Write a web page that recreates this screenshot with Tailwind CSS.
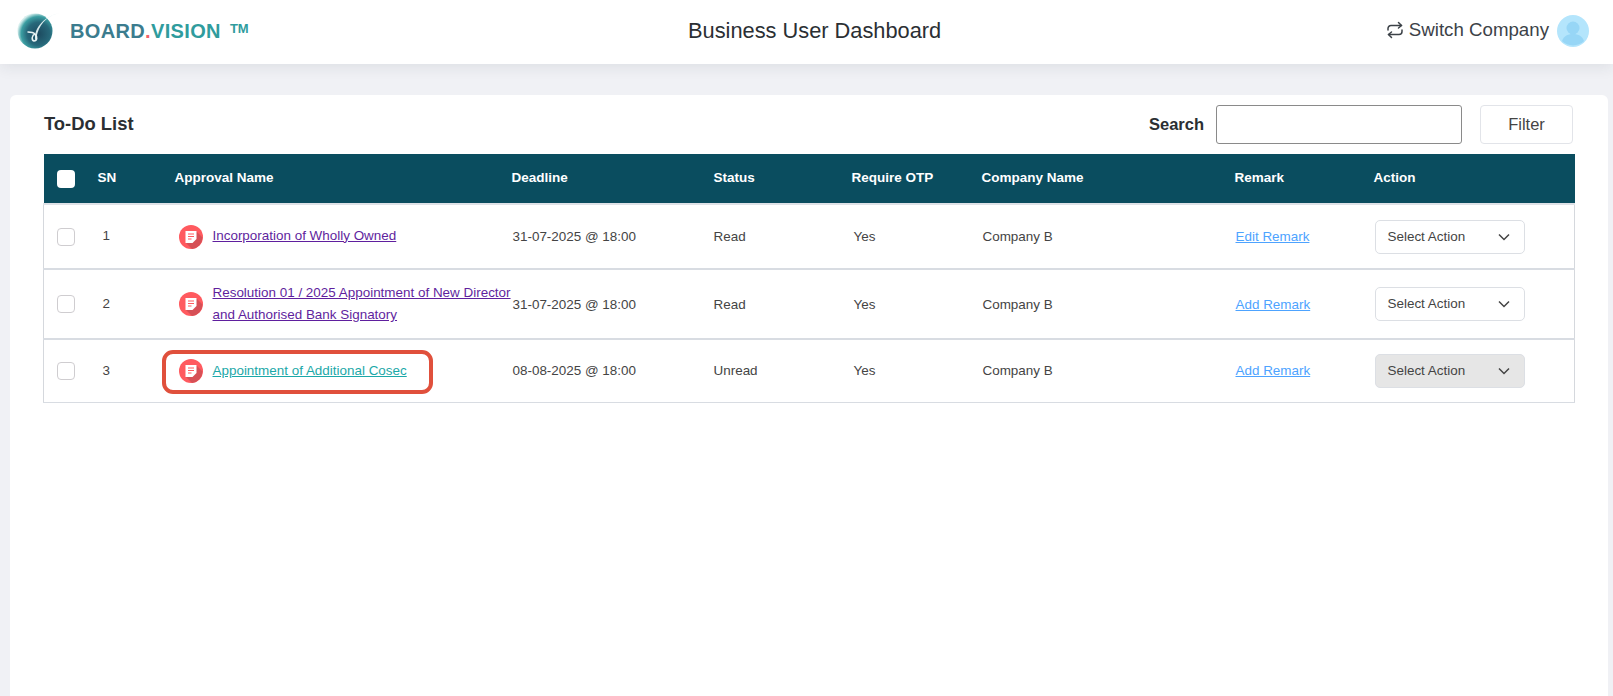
<!DOCTYPE html>
<html lang="en">
  <head>
    <meta charset="UTF-8" />
    <meta name="viewport" content="width=device-width, initial-scale=1.0" />
    <title>Business User Dashboard</title>
    <script src="https://cdn.jsdelivr.net/npm/@tailwindcss/browser@4"></script>
  </head>
  <body class="bg-[#f0f1f5] h-[696px] overflow-hidden font-['Liberation_Sans',Arial,sans-serif] text-[#444]">
    <!-- top bar -->
    <header class="relative z-10 h-16 pb-[2px] bg-white shadow-[0_3px_14px_rgba(30,40,60,0.09)] flex items-center">
      <div class="w-[688px] flex items-center shrink-0">
        <svg class="ml-[16px] w-[46px] h-[38px] shrink-0" viewBox="0 1 46 38">
          <defs>
            <radialGradient id="orb" cx="60%" cy="58%" r="60%">
              <stop offset="0" stop-color="#1c4a5f" />
              <stop offset="0.55" stop-color="#27687a" />
              <stop offset="0.82" stop-color="#3b9ea2" />
              <stop offset="1" stop-color="#d6eeed" />
            </radialGradient>
          </defs>
          <circle cx="19" cy="20" r="17.500" fill="url(#orb)" />
          <path d="M45 1.500C33 4 25 11 21.500 22l-2 8C17 20 25 6 45 1.500Z" fill="#e4f2f2" opacity="0.95" />
          <path d="M19 23c-3 1-4 6-1 7 3 0 4-4 1-7-1-1-4-2-7-2" fill="none" stroke="#e8f4f4" stroke-width="1.500" stroke-linecap="round" />
        </svg>
        <span class="ml-[8px] text-[20px] font-bold tracking-[0.35px] text-[#3b7c8e]">BOARD<span class="text-[#f2636a]">.</span><span class="text-[#2f9c9d]">VISION</span></span>
        <span class="ml-[9px] -mt-[5px] text-[13px] font-bold text-[#2f9c9d]">TM</span>
      </div>
      <h1 class="text-[21.800px] text-[#2b2f33]">Business User Dashboard</h1>
      <div class="ml-auto mr-[24px] flex items-center">
        <svg class="w-[18px] h-[18px] -mt-[3px]" viewBox="0 0 18 18" fill="none" stroke="#3c4248" stroke-width="1.500" stroke-linecap="round" stroke-linejoin="round">
          <path d="M12.500 1.500 15.500 4.500 12.500 7" />
          <path d="M15.500 4.500H5A3 3 0 0 0 2 7.500V9" />
          <path d="M5.500 16.500 2.500 13.500 5.500 11" />
          <path d="M2.500 13.500H13A3 3 0 0 0 16 10.500V9" />
        </svg>
        <span class="ml-[5px] -mt-[2px] text-[18.700px] text-[#3c4248]">Switch Company</span>
        <svg class="ml-[8px] w-8 h-8" viewBox="0 0 32 32">
          <circle cx="16" cy="16" r="16" fill="#b4e5fc" />
          <circle cx="16" cy="13" r="6.500" fill="#97d6f6" />
          <path d="M5 26c2-6 7-7 11-7s9 1 11 7a16 16 0 0 1-22 0Z" fill="#97d6f6" />
        </svg>
      </div>
    </header>

    <main class="pt-[31px] px-[10px]">
      <section class="h-[601px] w-[1598px] bg-white rounded-t-md pt-[10px] pl-[34px]">
        <div class="w-[1531px] h-[39px] flex items-center">
          <h2 class="-mt-[2px] text-[18.400px] font-bold text-[#2b2f33]">To-Do List</h2>
          <label class="ml-auto text-[16.500px] font-bold text-[#2b2f33]">Search</label>
          <input type="text" class="ml-[12px] w-[246px] h-[39px] bg-white border border-[#8a8a8a] rounded-[3px]" />
          <button class="ml-[18px] mr-[2px] w-[93px] h-[39px] bg-white border border-[#e2e4e9] rounded text-[16.500px] text-[#444]">Filter</button>
        </div>

        <table class="-ml-px mt-[10px] w-[1531px] table-fixed border-collapse text-[13.440px]">
          <colgroup>
            <col class="w-[54px]" />
            <col class="w-[77px]" />
            <col class="w-[337px]" />
            <col class="w-[202px]" />
            <col class="w-[138px]" />
            <col class="w-[130px]" />
            <col class="w-[253px]" />
            <col class="w-[139px]" />
            <col class="w-[201px]" />
          </colgroup>
          <thead>
            <tr class="h-[50px] bg-[#0a4d5f] text-white text-left text-[13.500px]">
              <th class="pl-[13px] font-normal"><span class="block w-[18px] h-[18px] bg-white rounded"></span></th>
              <th class="font-bold">SN</th>
              <th class="font-bold">Approval Name</th>
              <th class="font-bold">Deadline</th>
              <th class="font-bold">Status</th>
              <th class="font-bold">Require OTP</th>
              <th class="font-bold">Company Name</th>
              <th class="font-bold">Remark</th>
              <th class="font-bold">Action</th>
            </tr>
          </thead>
          <tbody>
            <tr class="h-[65px] border-x border-x-[#d5d8dd] border-t-[2px] border-t-[#dfe2e7] border-b-[2px] border-b-[#d8dce2]">
              <td class="pl-[13px]"><span class="block w-[18px] h-[18px] border border-[#cfcdd0] rounded bg-white"></span></td>
              <td class="pl-[5px]">1</td>
              <td class="pl-[4px]">
                <div class="flex items-center">
                  <svg class="w-6 h-6 shrink-0" viewBox="0 0 24 24">
                    <circle cx="12" cy="12" r="12" fill="#ff5a5f" />
                    <path d="M7 18 17 6l6.500 6.500A12 12 0 0 1 13 24Z" fill="#d65056" />
                    <path d="M6.500 6h11v8l-4 4h-7Z" fill="#fff" />
                    <path d="M9 9h6M9 11.500h6M9 14h3.500" stroke="#ff5a5f" stroke-width="1.200" />
                  </svg>
                  <a href="#" class="ml-[10px] -mt-[2px] leading-[22px] text-[#5f1f9e] underline">Incorporation of Wholly Owned</a>
                </div>
              </td>
              <td class="pl-px pt-[2px]">31-07-2025 @ 18:00</td>
              <td class="pt-[2px]">Read</td>
              <td class="pl-[2px] pt-[2px]">Yes</td>
              <td class="pl-px pt-[2px]">Company B</td>
              <td class="pl-px pt-[2px]"><a href="#" class="text-[#4da3ff] underline">Edit Remark</a></td>
              <td class="pl-px">
                <div class="w-[150px] h-[34px] px-[12px] flex items-center justify-between bg-white border border-[#dcdfe4] rounded-[5px]">
                  <span class="pt-px">Select Action</span>
                  <svg class="w-[14px] h-[14px] mr-px" viewBox="0 0 14 14" fill="none" stroke="#444" stroke-width="1.500"><path d="M2 4.500 7 9.500 12 4.500" /></svg>
                </div>
              </td>
            </tr>
            <tr class="h-[70px] border-x border-x-[#d5d8dd] border-b-[2px] border-b-[#d8dce2]">
              <td class="pl-[13px]"><span class="block w-[18px] h-[18px] border border-[#cfcdd0] rounded bg-white"></span></td>
              <td class="pl-[5px]">2</td>
              <td class="pl-[4px]">
                <div class="flex items-center">
                  <svg class="w-6 h-6 shrink-0" viewBox="0 0 24 24">
                    <circle cx="12" cy="12" r="12" fill="#ff5a5f" />
                    <path d="M7 18 17 6l6.500 6.500A12 12 0 0 1 13 24Z" fill="#d65056" />
                    <path d="M6.500 6h11v8l-4 4h-7Z" fill="#fff" />
                    <path d="M9 9h6M9 11.500h6M9 14h3.500" stroke="#ff5a5f" stroke-width="1.200" />
                  </svg>
                  <a href="#" class="ml-[10px] leading-[22px] text-[#5f1f9e] underline whitespace-nowrap">Resolution 01 / 2025 Appointment of New Director<br />and Authorised Bank Signatory</a>
                </div>
              </td>
              <td class="pl-px pt-[2px]">31-07-2025 @ 18:00</td>
              <td class="pt-[2px]">Read</td>
              <td class="pl-[2px] pt-[2px]">Yes</td>
              <td class="pl-px pt-[2px]">Company B</td>
              <td class="pl-px pt-[2px]"><a href="#" class="text-[#4da3ff] underline">Add Remark</a></td>
              <td class="pl-px">
                <div class="w-[150px] h-[34px] px-[12px] flex items-center justify-between bg-white border border-[#dcdfe4] rounded-[5px]">
                  <span class="pt-px">Select Action</span>
                  <svg class="w-[14px] h-[14px] mr-px" viewBox="0 0 14 14" fill="none" stroke="#444" stroke-width="1.500"><path d="M2 4.500 7 9.500 12 4.500" /></svg>
                </div>
              </td>
            </tr>
            <tr class="h-[63px] border-x border-x-[#d5d8dd] border-b border-b-[#d8dce2]">
              <td class="pl-[13px]"><span class="block w-[18px] h-[18px] border border-[#cfcdd0] rounded bg-white"></span></td>
              <td class="pl-[5px]">3</td>
              <td class="pl-[4px] relative">
                <div class="flex items-center">
                  <svg class="w-6 h-6 shrink-0" viewBox="0 0 24 24">
                    <circle cx="12" cy="12" r="12" fill="#ff5a5f" />
                    <path d="M7 18 17 6l6.500 6.500A12 12 0 0 1 13 24Z" fill="#d65056" />
                    <path d="M6.500 6h11v8l-4 4h-7Z" fill="#fff" />
                    <path d="M9 9h6M9 11.500h6M9 14h3.500" stroke="#ff5a5f" stroke-width="1.200" />
                  </svg>
                  <a href="#" class="ml-[10px] leading-[22px] text-[#1ba8a8] underline">Appointment of Additional Cosec</a>
                </div>
                <span class="absolute left-[-13px] top-[10px] w-[271px] h-[44px] border-4 border-[#e0503c] rounded-[11px] pointer-events-none"></span>
              </td>
              <td class="pl-px">08-08-2025 @ 18:00</td>
              <td>Unread</td>
              <td class="pl-[2px]">Yes</td>
              <td class="pl-px">Company B</td>
              <td class="pl-px"><a href="#" class="text-[#4da3ff] underline">Add Remark</a></td>
              <td class="pl-px">
                <div class="w-[150px] h-[34px] px-[12px] flex items-center justify-between bg-[#e6e6e6] border border-[#dcdfe4] rounded-[5px]">
                  <span>Select Action</span>
                  <svg class="w-[14px] h-[14px] mr-px" viewBox="0 0 14 14" fill="none" stroke="#444" stroke-width="1.500"><path d="M2 4.500 7 9.500 12 4.500" /></svg>
                </div>
              </td>
            </tr>
          </tbody>
        </table>
      </section>
    </main>
  </body>
</html>
